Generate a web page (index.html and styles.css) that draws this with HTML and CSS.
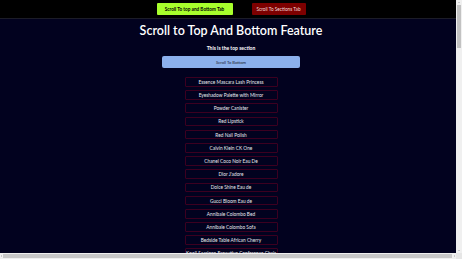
FILE: index.html
```html
<!DOCTYPE html>
<html lang="en">
  <head>
    <meta charset="UTF-8" />
    <meta name="viewport" content="width=device-width, initial-scale=1.0" />
    <title>Scroll to Top And Bottom Feature</title>
    <link rel="stylesheet" href="styles.css">
  </head>
  <body>
    <div class="page">
      <div class="viewport">
        <div class="wrap">
          <nav class="tabs">
            <button class="tab tab-green" type="button">Scroll To top and Bottom Tab</button>
            <button class="tab tab-red" type="button">Scroll To Sections Tab</button>
          </nav>
          <main class="content">
            <h1>Scroll to Top And Bottom Feature</h1>
            <h2>This is the top section</h2>
            <button class="scroll-btn" type="button">Scroll To Bottom</button>
            <ul class="product-list">
              <li>Essence Mascara Lash Princess</li>
              <li>Eyeshadow Palette with Mirror</li>
              <li>Powder Canister</li>
              <li>Red Lipstick</li>
              <li>Red Nail Polish</li>
              <li>Calvin Klein CK One</li>
              <li>Chanel Coco Noir Eau De</li>
              <li>Dior J'adore</li>
              <li>Dolce Shine Eau de</li>
              <li>Gucci Bloom Eau de</li>
              <li>Annibale Colombo Bed</li>
              <li>Annibale Colombo Sofa</li>
              <li>Bedside Table African Cherry</li>
              <li>Knoll Saarinen Executive Conference Chair</li>
            </ul>
          </main>
        </div>
      </div>
      <!-- fake scrollbars, the headless browser hides the real ones -->
      <div class="vbar">
        <span class="arrow arrow-up"></span>
        <span class="vthumb"></span>
        <span class="vtrack"></span>
        <span class="arrow arrow-down"></span>
      </div>
      <div class="hbar">
        <span class="arrow arrow-left"></span>
        <span class="hthumb"></span>
        <span class="arrow arrow-right"></span>
      </div>
      <div class="corner"></div>
    </div>
  </body>
</html>
```

FILE: styles.css
```css
* {
  box-sizing: border-box;
}

body {
  margin: 0;
  font-family: "Lato", "Open Sans", sans-serif;
  background-color: #02021f;
}

.page {
  width: 462px;
  height: 259px;
  display: grid;
  grid-template-columns: 456px 6px;
  grid-template-rows: 253px 6px;
}

.viewport {
  overflow: hidden;
  background-color: #02021f;
}

.wrap {
  width: 462px;
}

/* scrollbars */
.vbar {
  display: flex;
  flex-direction: column;
  align-items: center;
  background-color: #f0f0f0;
}

.vthumb {
  width: 4px;
  height: 43px;
  background-color: #c2c2c2;
}

.vtrack {
  flex: 1;
}

.hbar {
  display: flex;
  align-items: center;
  background-color: #f0f0f0;
}

.hthumb {
  flex: 1;
  height: 4px;
  margin-right: 1px;
  background-color: #c8c8c8;
}

.corner {
  background-color: #e6e6e6;
}

.arrow {
  width: 0;
  height: 0;
  margin: 2px auto;
}

.arrow-up {
  border-left: 1.5px solid transparent;
  border-right: 1.5px solid transparent;
  border-bottom: 1.5px solid #a3a3a3;
}

.arrow-down {
  border-left: 1.5px solid transparent;
  border-right: 1.5px solid transparent;
  border-top: 1.5px solid #a3a3a3;
}

.arrow-left {
  margin: 0 1px 0 1px;
  border-top: 1.5px solid transparent;
  border-bottom: 1.5px solid transparent;
  border-right: 1.5px solid #a3a3a3;
}

.arrow-right {
  margin: 0 1px 0 1px;
  border-top: 1.5px solid transparent;
  border-bottom: 1.5px solid transparent;
  border-left: 1.5px solid #a3a3a3;
}

/* page */
.tabs {
  height: 19px;
  background-color: #000;
  border-bottom: 1px solid #1c1c28;
  display: flex;
  justify-content: center;
  align-items: center;
  gap: 19px;
}

.tab {
  height: 12px;
  padding: 0;
  border: none;
  border-radius: 1px;
  font-family: inherit;
  font-size: 4.7px;
  cursor: pointer;
}

.tab-green {
  width: 76px;
  background-color: #a8ff2c;
  color: #000;
  font-weight: bold;
}

.tab-red {
  width: 54px;
  background-color: #7d0000;
  color: #f2dada;
}

.content {
  display: flex;
  flex-direction: column;
  align-items: center;
  color: #fff;
}

h1 {
  margin: 3px 0 0;
  font-size: 12.5px;
  font-weight: 600;
  line-height: 17px;
}

h2 {
  margin: 6px 0 0;
  font-size: 5px;
  font-weight: bold;
  line-height: 7px;
}

.scroll-btn {
  width: 138px;
  height: 12px;
  margin-top: 4px;
  padding: 0;
  border: none;
  border-radius: 2px;
  background-color: #8cb0ec;
  color: #1a1a2a;
  font-family: inherit;
  font-size: 4.2px;
}

.product-list {
  list-style: none;
  margin: 9px 0 0;
  padding: 0;
  display: flex;
  flex-direction: column;
  gap: 3.5px;
}

.product-list li {
  width: 93px;
  height: 9.7px;
  border: 1px solid #3c0020;
  border-radius: 1px;
  display: flex;
  align-items: center;
  justify-content: center;
  font-size: 4.8px;
  color: #e8e8ee;
  white-space: nowrap;
}
```
